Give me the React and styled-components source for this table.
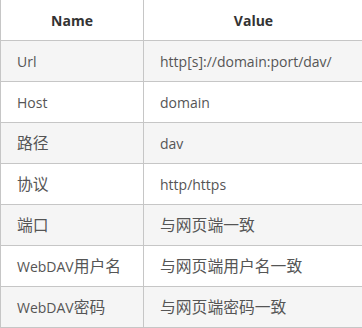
import React from 'react';
import styled, { createGlobalStyle } from 'styled-components';

const GlobalStyle = createGlobalStyle`
  html, body {
    margin: 0;
    padding: 0;
    background: #ffffff;
  }
  body {
    width: 362px;
    height: 328px;
    overflow: hidden;
    font-family: "Open Sans", "Noto Sans CJK SC", sans-serif;
  }
`;

const Table = styled.table`
  width: 364px;
  margin-top: -1px;
  border-collapse: collapse;
  table-layout: fixed;
  font-size: 14px;
  color: #555555;
`;

const Head = styled.th`
  height: 40px;
  padding: 0 16px;
  border: 1px solid #c6c6c6;
  color: #333333;
  font-weight: 700;
  text-align: center;
  background: #ffffff;
  width: ${props => props.$width || 'auto'};
`;

const Row = styled.tr`
  background: ${props => (props.$striped ? '#f5f5f5' : '#ffffff')};
`;

const Cell = styled.td`
  height: 40px;
  padding: 0 16px;
  border: 1px solid #c6c6c6;
  text-align: left;
  white-space: nowrap;
`;

// CJK glyphs render a bit larger than the latin ones in the source
const Han = styled.span`
  font-family: "Noto Sans CJK SC", sans-serif;
  font-size: 15.8px;
  line-height: 1;
`;

const Mixed = ({ text }) =>
  text.split(/([\u4e00-\u9fff]+)/).map((part, i) =>
    /[\u4e00-\u9fff]/.test(part) ? <Han key={i}>{part}</Han> : part
  );

const rows = [
  ['Url', 'http[s]://domain:port/dav/'],
  ['Host', 'domain'],
  ['路径', 'dav'],
  ['协议', 'http/https'],
  ['端口', '与网页端一致'],
  ['WebDAV用户名', '与网页端用户名一致'],
  ['WebDAV密码', '与网页端密码一致'],
];

const App = () => (
  <>
    <GlobalStyle />
    <Table>
      <thead>
        <tr>
          <Head $width="110px">Name</Head>
          <Head>Value</Head>
        </tr>
      </thead>
      <tbody>
        {rows.map(([name, value], i) => (
          <Row key={name} $striped={i % 2 === 0}>
            <Cell><Mixed text={name} /></Cell>
            <Cell><Mixed text={value} /></Cell>
          </Row>
        ))}
      </tbody>
    </Table>
  </>
);

export default App;
